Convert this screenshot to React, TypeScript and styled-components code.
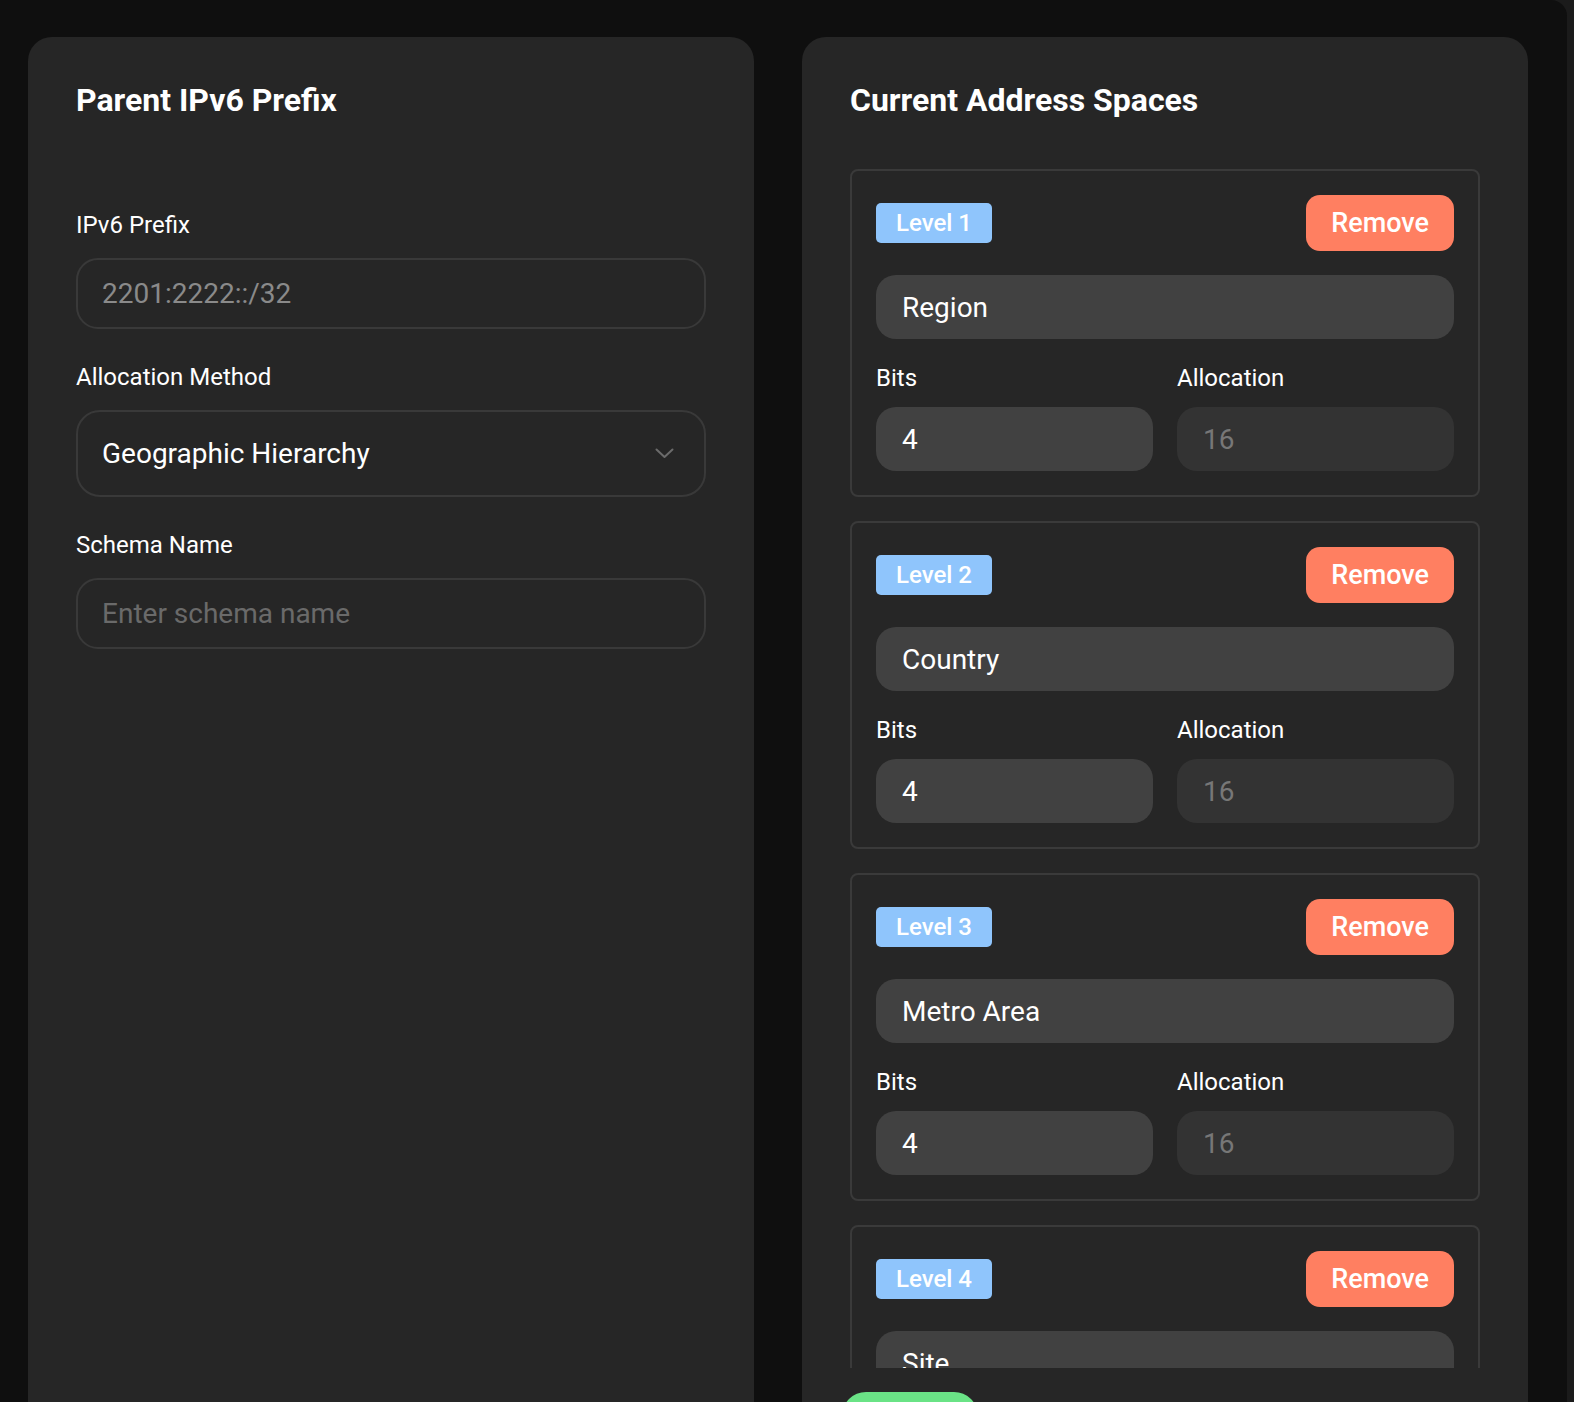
import styled, { createGlobalStyle } from 'styled-components';

const GlobalStyle = createGlobalStyle`
  html, body {
    margin: 0;
    padding: 0;
    background: #1b1b1b;
    font-family: Roboto, 'Liberation Sans', sans-serif;
  }
  * {
    box-sizing: border-box;
  }
`;

const Shell = styled.div`
  display: grid;
  grid-template-columns: 726px 726px;
  column-gap: 48px;
  width: calc(100% - 7px);
  height: 100vh;
  overflow: hidden;
  padding: 37px 0 0 28px;
  background: #0f0f0f;
  border-radius: 0 16px 0 0;
`;

const Panel = styled.section`
  display: flex;
  flex-direction: column;
  min-height: 1480px;
  padding: 44px 48px 48px;
  background: #262626;
  border-radius: 24px;
`;

const PanelTitle = styled.h2`
  margin: 0 0 50px;
  font-size: 32px;
  line-height: 1.2;
  font-weight: 700;
  color: #ffffff;
`;

const Form = styled.div`
  display: flex;
  flex-direction: column;
  gap: 34px;
  padding-top: 42px;
`;

const Field = styled.div`
  display: flex;
  flex-direction: column;
`;

const Label = styled.label`
  margin-bottom: 18px;
  font-size: 24px;
  line-height: 1.2;
  color: #ffffff;
`;

const SmallLabel = styled(Label)`
  margin-bottom: 15px;
  line-height: 27px;
`;

const OutlineInput = styled.input`
  height: 71px;
  padding: 0 24px;
  font-family: inherit;
  font-size: 28px;
  color: #8a8a8a;
  background: transparent;
  border: 2px solid #393939;
  border-radius: 22px;
  outline: none;

  &::placeholder {
    color: #6a6a6a;
  }
`;

const SelectBox = styled.div`
  display: flex;
  align-items: center;
  justify-content: space-between;
  height: 87px;
  padding: 0 30px 0 24px;
  font-size: 28px;
  color: #ffffff;
  border: 2px solid #393939;
  border-radius: 24px;
  cursor: pointer;
`;

const LevelList = styled.div`
  display: flex;
  flex-direction: column;
  gap: 24px;
  height: 1199px;
  overflow: hidden;
`;

const LevelCard = styled.div`
  flex-shrink: 0;
  padding: 24px;
  border: 2px solid #3a3a3a;
  border-radius: 8px;
`;

const LevelHeader = styled.div`
  display: flex;
  align-items: center;
  justify-content: space-between;
  height: 56px;
  margin-bottom: 24px;
`;

const Badge = styled.span`
  display: inline-flex;
  align-items: center;
  height: 40px;
  padding: 0 20px;
  font-size: 24px;
  font-weight: 500;
  color: #ffffff;
  background: #8fc5fc;
  border-radius: 5px;
`;

const RemoveButton = styled.button`
  height: 56px;
  padding: 0 25px;
  font-family: inherit;
  font-size: 27px;
  font-weight: 500;
  color: #ffffff;
  background: #ff7f61;
  border: none;
  border-radius: 14px;
  cursor: pointer;
`;

const FilledInput = styled.input<{ $muted?: boolean }>`
  width: 100%;
  height: 64px;
  padding: 0 26px;
  font-family: inherit;
  font-size: 28px;
  color: ${(p) => (p.$muted ? '#777777' : '#ffffff')};
  background: ${(p) => (p.$muted ? '#333333' : '#414141')};
  border: none;
  border-radius: 20px;
  outline: none;
`;

const SplitRow = styled.div`
  display: grid;
  grid-template-columns: 1fr 1fr;
  gap: 24px;
  margin-top: 26px;
`;

const Footer = styled.div`
  margin: 24px 0 0 -8px;
`;

const AddButton = styled.button`
  width: 136px;
  height: 56px;
  font-family: inherit;
  font-size: 26px;
  font-weight: 500;
  color: #ffffff;
  background: #6ae386;
  border: none;
  border-radius: 24px;
`;

const levels = [
  { name: 'Region', bits: '4', allocation: '16' },
  { name: 'Country', bits: '4', allocation: '16' },
  { name: 'Metro Area', bits: '4', allocation: '16' },
  { name: 'Site', bits: '4', allocation: '16' },
  { name: 'Building', bits: '4', allocation: '16' },
];

const Chevron = () => (
  <svg width="19" height="11" viewBox="0 0 19 11" fill="none">
    <polyline
      points="1.5,1.5 9.5,9 17.5,1.5"
      stroke="#6b6b6b"
      strokeWidth="2"
      strokeLinecap="round"
      strokeLinejoin="round"
    />
  </svg>
);

export default function App() {
  return (
    <>
      <GlobalStyle />
      <Shell>
        <Panel>
          <PanelTitle>Parent IPv6 Prefix</PanelTitle>
          <Form>
            <Field>
              <Label>IPv6 Prefix</Label>
              <OutlineInput defaultValue="2201:2222::/32" readOnly />
            </Field>
            <Field>
              <Label>Allocation Method</Label>
              <SelectBox>
                <span>Geographic Hierarchy</span>
                <Chevron />
              </SelectBox>
            </Field>
            <Field>
              <Label>Schema Name</Label>
              <OutlineInput placeholder="Enter schema name" />
            </Field>
          </Form>
        </Panel>

        <Panel>
          <PanelTitle>Current Address Spaces</PanelTitle>
          <LevelList>
            {levels.map((level, i) => (
              <LevelCard key={level.name}>
                <LevelHeader>
                  <Badge>Level {i + 1}</Badge>
                  <RemoveButton>Remove</RemoveButton>
                </LevelHeader>
                <FilledInput defaultValue={level.name} />
                <SplitRow>
                  <Field>
                    <SmallLabel>Bits</SmallLabel>
                    <FilledInput defaultValue={level.bits} />
                  </Field>
                  <Field>
                    <SmallLabel>Allocation</SmallLabel>
                    <FilledInput $muted defaultValue={level.allocation} readOnly />
                  </Field>
                </SplitRow>
              </LevelCard>
            ))}
          </LevelList>
          <Footer>
            <AddButton>Add Level</AddButton>
          </Footer>
        </Panel>
      </Shell>
    </>
  );
}
